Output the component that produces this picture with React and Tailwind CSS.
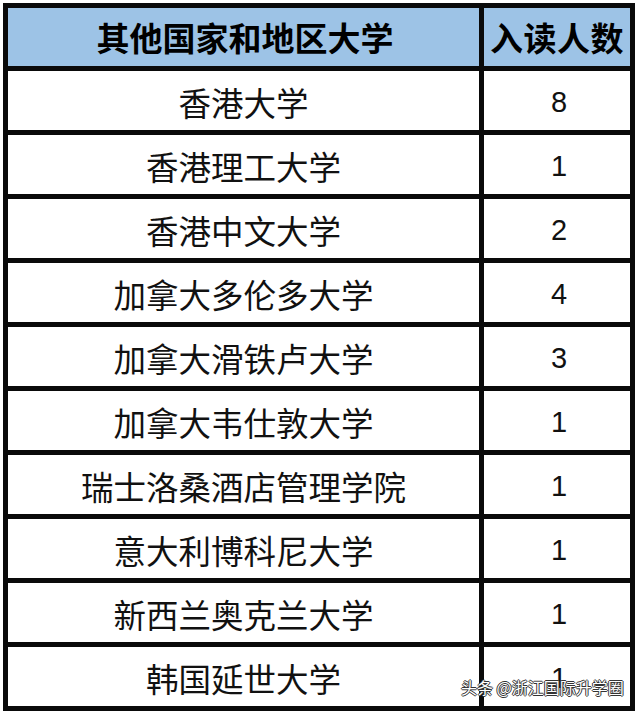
import React from 'react';

const rows = [
  ['香港大学', 8],
  ['香港理工大学', 1],
  ['香港中文大学', 2],
  ['加拿大多伦多大学', 4],
  ['加拿大滑铁卢大学', 3],
  ['加拿大韦仕敦大学', 1],
  ['瑞士洛桑酒店管理学院', 1],
  ['意大利博科尼大学', 1],
  ['新西兰奥克兰大学', 1],
  ['韩国延世大学', 1],
];

const cjk = "font-['Noto_Sans_CJK_SC','Noto_Sans',sans-serif]";

const App = () => {
  return (
    <div className="relative w-[640px] h-[712px] overflow-hidden bg-white pt-[3px] pl-[3px]">
      <div className="grid w-[632px] grid-cols-[471px_146px] grid-rows-[58px_repeat(10,59px)] gap-[5px] bg-[#0a0a0a] p-[5px]">
        {/* header */}
        <div className={`flex items-center justify-center bg-[#9dc3e6] pl-[3px] pt-[1px] text-[33px] font-bold leading-none text-black ${cjk}`}>
          其他国家和地区大学
        </div>
        <div className={`flex items-center justify-center bg-[#9dc3e6] pt-[1px] text-[33px] font-bold leading-none tracking-[0.5px] text-black ${cjk}`}>
          入读人数
        </div>

        {rows.map(([name, count]) => (
          <React.Fragment key={name}>
            <div className={`flex items-center justify-center bg-white pt-[3px] text-[32.5px] leading-none text-[#111] ${cjk}`}>
              {name}
            </div>
            <div className="flex items-center justify-center bg-white pt-[3px] pl-[4px] font-['Liberation_Sans',Arial,sans-serif] text-[29px] leading-none text-[#111]">
              {count}
            </div>
          </React.Fragment>
        ))}
      </div>

      {/* watermark */}
      <div
        className={`absolute left-[461px] top-[679px] text-[16px] leading-none text-white ${cjk} [text-shadow:1px_0_0_#333,-1px_0_0_#333,0_1px_0_#333,0_-1px_0_#333]`}
      >
        头条 @浙江国际升学圈
      </div>
    </div>
  );
};

export default App;
